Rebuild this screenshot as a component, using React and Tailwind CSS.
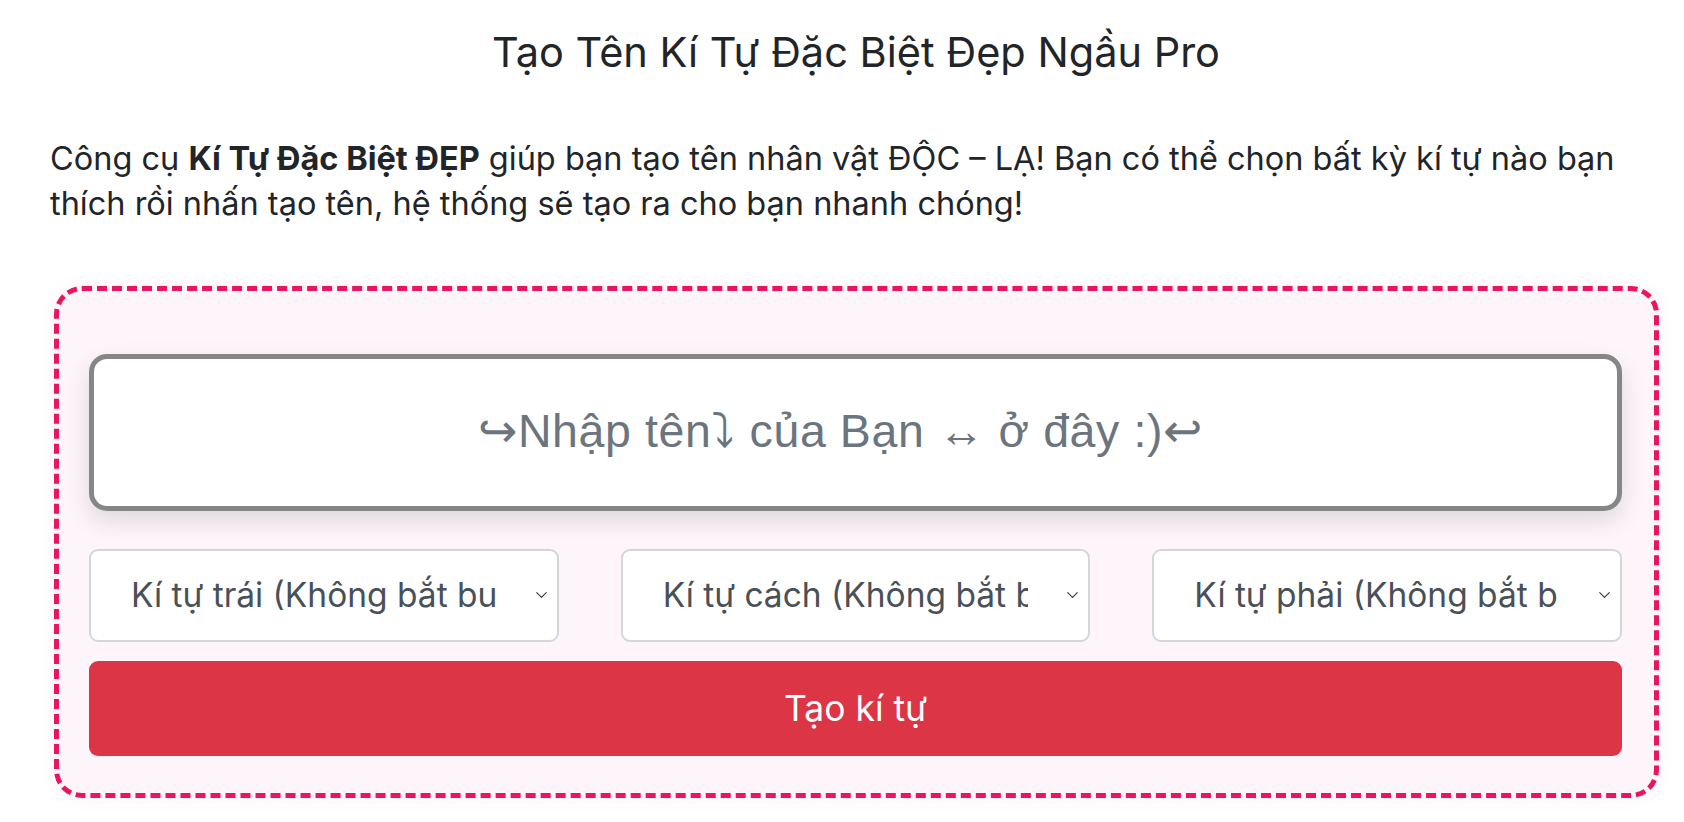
import { ChevronDown } from 'lucide-react'

const selects = ['Kí tự trái (Không bắt buộc)', 'Kí tự cách (Không bắt buộc)', 'Kí tự phải (Không bắt buộc)']

function FakeSelect({ label }) {
  return (
    <div className="relative flex-1 min-w-0 h-[93px] bg-white border-2 border-[#d3d6da] rounded-[9px] flex items-center pl-[40px] pr-[60px]">
      <span className="block flex-1 min-w-0 overflow-hidden whitespace-nowrap text-[33.5px] text-[#495057]">{label}</span>
      <ChevronDown size={19} strokeWidth={1.4} className="absolute right-[6px] top-1/2 -translate-y-1/2 text-[#343a40]" />
    </div>
  )
}

export default function App() {
  return (
    <div className="min-h-screen bg-white font-['Inter','Noto_Sans',sans-serif] text-[#212529]">
      <div className="ml-[50px] w-[1612px] pt-[28px]">
        <h1 className="text-center text-[41.5px] leading-[1.2] font-normal">Tạo Tên Kí Tự Đặc Biệt Đẹp Ngầu Pro</h1>

        <p className="mt-[58px] text-[32.5px] leading-[45px]">
          Công cụ <b className="font-bold">Kí Tự Đặc Biệt ĐẸP</b> giúp bạn tạo tên nhân vật ĐỘC – LẠ! Bạn có thể chọn bất kỳ kí tự nào bạn
          thích rồi nhấn tạo tên, hệ thống sẽ tạo ra cho bạn nhanh chóng!
        </p>

        <div className="mt-[60px] ml-[4px] w-[1605px] border-[5px] border-dashed border-[#ea1560] rounded-[28px] bg-[#fdf5fa] shadow-[0_0_18px_rgba(233,30,99,0.06)] pt-[63px] pb-[37px] pl-[30px] pr-[32px]">
          <div className="h-[157px] bg-white border-[5px] border-[#868686] rounded-[18px] shadow-[0_10px_24px_rgba(0,0,0,0.12)] flex items-center justify-center pr-[30px]">
            <span className="font-['Liberation_Sans',Arial,sans-serif] text-[46.5px] tracking-[0.6px] text-[#6c757d]">
              ↪Nhập tên⤵ của Bạn ↔ ở đây :)↩
            </span>
          </div>

          <div className="mt-[38px] flex gap-[62px]">
            {selects.map(s => <FakeSelect key={s} label={s} />)}
          </div>

          <button type="button" className="mt-[19px] w-full h-[95px] bg-[#dc3545] rounded-[9px] text-white text-[35.5px]">
            Tạo kí tự
          </button>
        </div>
      </div>
    </div>
  )
}
